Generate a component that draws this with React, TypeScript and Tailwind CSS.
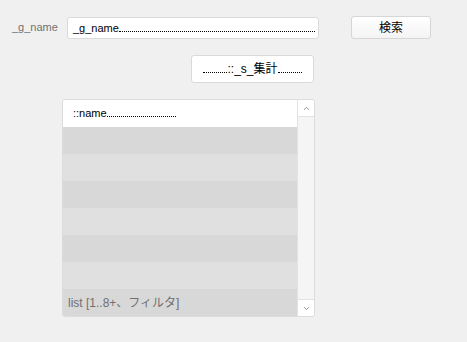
import { ChevronDown, ChevronUp } from "lucide-react"

const font = { fontFamily: '"Liberation Sans", "Noto Sans CJK JP", sans-serif' }

function Leader({ text, className }: { text: string; className?: string }) {
    return (
        <span className={"flex items-end " + (className ?? "")}>
            <span className="leading-none">{text}</span>
            <span className="flex-1 border-b border-dotted border-black mb-[2px]" />
        </span>
    )
}

export default function App() {
    const rows = ["bg-[#d8d8d8]", "bg-[#e0e0e0]", "bg-[#d8d8d8]", "bg-[#e0e0e0]", "bg-[#d8d8d8]", "bg-[#e0e0e0]"]

    return (
        <div className="w-[467px] h-[342px] bg-[#f0f0f0] text-[11px] text-black overflow-hidden" style={font}>
            {/* search row */}
            <div className="flex items-center pt-4 pl-3">
                <span className="w-[55px] text-[#707070] text-[11px]">_g_name</span>
                <div className="w-[252px] h-[22px] mt-[1px] bg-white border border-[#dadada] rounded-[3px] flex items-center pl-[5px] pr-[3px]">
                    <Leader text="_g_name" className="w-full" />
                </div>
                <button className="ml-8 w-[80px] h-[23px] rounded-[3px] border border-[#d6d6d6] bg-gradient-to-b from-white to-[#f4f4f4] text-[12px] flex items-center justify-center">
                    検索
                </button>
            </div>

            {/* aggregate button */}
            <div className="flex pl-[191px] mt-4">
                <button className="w-[123px] h-[28px] rounded-[3px] border border-[#dadada] bg-white flex items-center justify-center px-[11px]">
                    <span className="flex items-end w-full">
                        <span className="flex-1 border-b border-dotted border-black mb-[2px]" />
                        <span className="leading-none text-[12px]">::_s_集計</span>
                        <span className="flex-1 border-b border-dotted border-black mb-[2px]" />
                    </span>
                </button>
            </div>

            {/* list */}
            <div className="ml-[62px] mt-4 w-[253px] h-[218px] border border-[#dcdcdc] rounded-[3px] flex overflow-hidden">
                <div className="flex-1 flex flex-col">
                    <div className="h-[27px] bg-white flex items-center pl-[10px]">
                        <Leader text="::name" className="w-[103px]" />
                    </div>
                    {rows.map((c, i) => (
                        <div key={i} className={"h-[27px] " + c} />
                    ))}
                    <div className="h-[27px] bg-[#d8d8d8] flex items-center pl-[5px] text-[#707070] text-[12px]">
                        list [1..8+、フィルタ]
                    </div>
                </div>
                <div className="w-[17px] bg-[#f5f5f5] border-l border-[#e2e2e2] flex flex-col justify-between">
                    <div className="h-[17px] bg-white border-b border-[#e2e2e2] flex items-center justify-center">
                        <ChevronUp className="w-[9px] h-[9px] text-[#707070]" strokeWidth={2} />
                    </div>
                    <div className="h-[17px] bg-white border-t border-[#e2e2e2] flex items-center justify-center">
                        <ChevronDown className="w-[9px] h-[9px] text-[#707070]" strokeWidth={2} />
                    </div>
                </div>
            </div>
        </div>
    )
}
